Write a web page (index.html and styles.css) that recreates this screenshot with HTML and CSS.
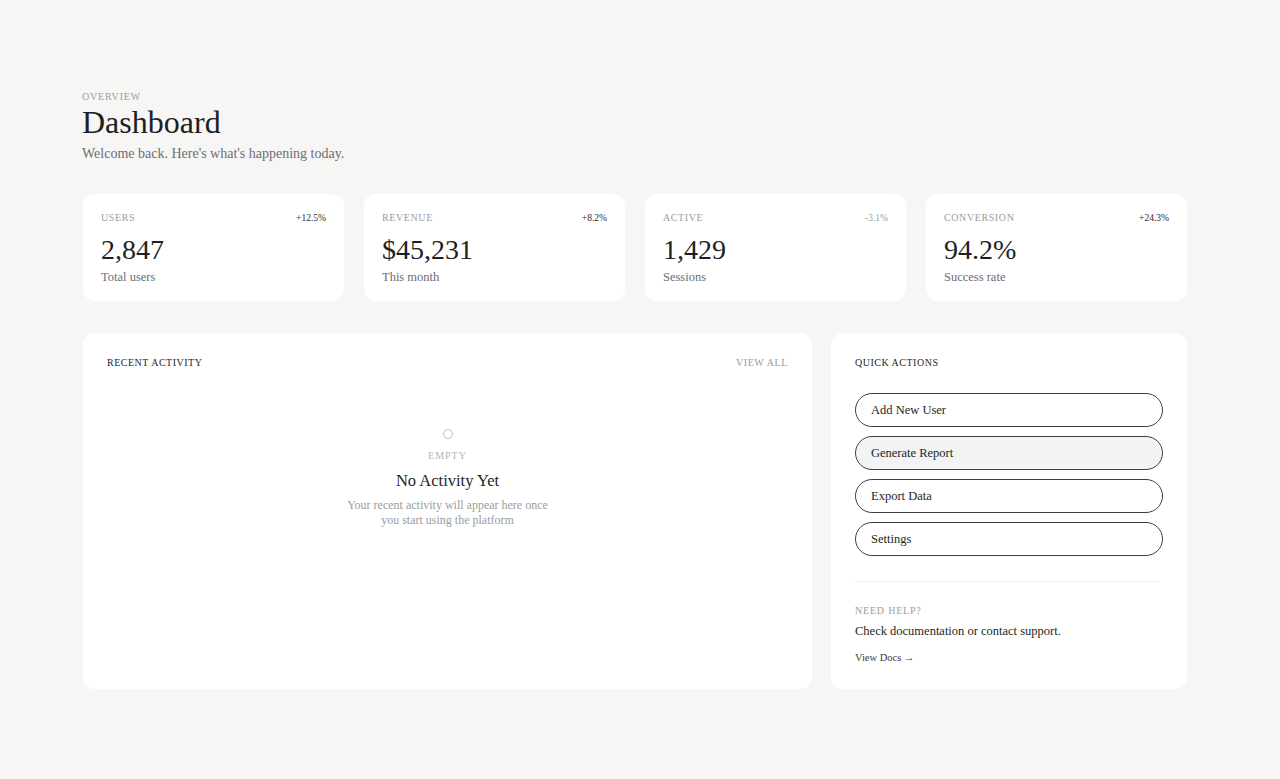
FILE: index.html
```html
<!DOCTYPE html>
<html lang="en">
<head>
    <meta charset="UTF-8">
    <meta name="viewport" content="width=device-width, initial-scale=1.0">
    <title>Dashboard</title>
    <link rel="stylesheet" href="styles.css">
</head>
<body>
    <main class="page">
        <header class="page-head">
            <p class="eyebrow">Overview</p>
            <h1>Dashboard</h1>
            <p class="subtitle">Welcome back. Here's what's happening today.</p>
        </header>

        <section class="stats">
            <div class="stat">
                <div class="stat-top">
                    <span class="stat-label">Users</span>
                    <span class="stat-change">+12.5%</span>
                </div>
                <div class="stat-value">2,847</div>
                <div class="stat-note">Total users</div>
            </div>
            <div class="stat">
                <div class="stat-top">
                    <span class="stat-label">Revenue</span>
                    <span class="stat-change">+8.2%</span>
                </div>
                <div class="stat-value">$45,231</div>
                <div class="stat-note">This month</div>
            </div>
            <div class="stat">
                <div class="stat-top">
                    <span class="stat-label">Active</span>
                    <span class="stat-change down">-3.1%</span>
                </div>
                <div class="stat-value">1,429</div>
                <div class="stat-note">Sessions</div>
            </div>
            <div class="stat">
                <div class="stat-top">
                    <span class="stat-label">Conversion</span>
                    <span class="stat-change">+24.3%</span>
                </div>
                <div class="stat-value">94.2%</div>
                <div class="stat-note">Success rate</div>
            </div>
        </section>

        <section class="panels">
            <div class="panel activity">
                <div class="panel-head">
                    <h2>Recent Activity</h2>
                    <a class="view-all" href="#">View All</a>
                </div>
                <div class="empty">
                    <span class="empty-dot"></span>
                    <span class="empty-tag">Empty</span>
                    <h3>No Activity Yet</h3>
                    <p>Your recent activity will appear here once<br>you start using the platform</p>
                </div>
            </div>

            <div class="panel actions">
                <div class="panel-head">
                    <h2>Quick Actions</h2>
                </div>
                <div class="action-list">
                    <button class="action">Add New User</button>
                    <button class="action active">Generate Report</button>
                    <button class="action">Export Data</button>
                    <button class="action">Settings</button>
                </div>
                <div class="help">
                    <p class="help-label">Need Help?</p>
                    <p class="help-text">Check documentation or contact support.</p>
                    <a class="help-link" href="#">View Docs &rarr;</a>
                </div>
            </div>
        </section>
    </main>
</body>
</html>
```

FILE: styles.css
```css
:root {
    --bg-color: #f7f6f4;
    --card-color: #ffffff;
    --text-color: #1d1f24;
    --muted-color: #6b6e75;
    --faint-color: #9a9ca1;
    --line-color: #f0efed;
}

* {
    box-sizing: border-box;
}

body {
    margin: 0;
    background: var(--bg-color);
    color: var(--text-color);
    font-family: "Liberation Serif", "DejaVu Serif", serif;
}

p, h1, h2, h3 {
    margin: 0;
    font-weight: normal;
}

.page {
    width: 1104px;
    margin: 0 0 0 83px;
    padding-top: 90px;
}

/* Header */
.eyebrow {
    font-size: 10px;
    letter-spacing: 0.8px;
    text-transform: uppercase;
    color: var(--faint-color);
    line-height: 14px;
    margin-left: -1px;
}

h1 {
    font-size: 32px;
    line-height: 38px;
    margin-top: -1px;
    margin-left: -1px;
}

.subtitle {
    font-size: 14px;
    color: var(--muted-color);
    line-height: 20px;
    margin-top: 3px;
    margin-left: -1px;
}

/* Stat cards */
.stats {
    display: grid;
    grid-template-columns: repeat(4, 1fr);
    gap: 20px;
    margin-top: 30px;
}

.stat {
    background: var(--card-color);
    border-radius: 12px;
    padding: 17px 18px 18px 18px;
    height: 107px;
}

.stat-top {
    display: flex;
    justify-content: space-between;
    align-items: center;
    line-height: 14px;
}

.stat-label {
    font-size: 10px;
    letter-spacing: 0.6px;
    text-transform: uppercase;
    color: var(--faint-color);
}

.stat-change {
    font-size: 9.5px;
    color: #2a2c31;
}

.stat-change.down {
    color: var(--faint-color);
}

.stat-value {
    font-size: 28px;
    line-height: 34px;
    margin-top: 8px;
}

.stat-note {
    font-size: 12.5px;
    color: var(--muted-color);
    line-height: 16px;
    margin-top: 2px;
}

/* Panels */
.panels {
    display: grid;
    grid-template-columns: 1fr 356px;
    gap: 19px;
    margin-top: 32px;
}

.panel {
    background: var(--card-color);
    border-radius: 12px;
    padding: 22px 24px 24px 24px;
    height: 356px;
}

.panel-head {
    display: flex;
    justify-content: space-between;
    align-items: center;
    line-height: 16px;
}

h2 {
    font-size: 10px;
    letter-spacing: 0.5px;
    text-transform: uppercase;
}

.view-all {
    font-size: 10px;
    letter-spacing: 0.6px;
    text-transform: uppercase;
    color: var(--faint-color);
    text-decoration: none;
}

/* Empty state */
.empty {
    display: flex;
    flex-direction: column;
    align-items: center;
    text-align: center;
    margin-top: 58px;
}

.empty-dot {
    width: 10px;
    height: 10px;
    border: 1px solid #b9bbbf;
    border-radius: 50%;
}

.empty-tag {
    font-size: 10px;
    letter-spacing: 1px;
    text-transform: uppercase;
    color: #b3b5b9;
    margin-top: 10px;
    line-height: 14px;
}

h3 {
    font-size: 16.5px;
    line-height: 22px;
    margin-top: 7px;
}

.empty p {
    font-size: 12px;
    line-height: 15px;
    color: var(--faint-color);
    margin-top: 6px;
}

/* Quick actions */
.action-list {
    display: flex;
    flex-direction: column;
    gap: 9px;
    margin-top: 22px;
}

.action {
    height: 34px;
    border: 1px solid #3d3f44;
    border-radius: 17px;
    background: var(--card-color);
    color: var(--text-color);
    text-align: left;
    padding: 0 15px;
    font-family: inherit;
    font-size: 12.5px;
    cursor: pointer;
}

.action.active,
.action:hover {
    background: #f1f3f4;
}

.help {
    border-top: 1px solid var(--line-color);
    margin-top: 25px;
    padding-top: 22px;
    margin-right: 3px;
}

.help-label {
    font-size: 10px;
    letter-spacing: 0.8px;
    text-transform: uppercase;
    color: var(--faint-color);
    line-height: 14px;
}

.help-text {
    font-size: 12.5px;
    line-height: 18px;
    margin-top: 4px;
}

.help-link {
    display: inline-block;
    font-size: 10.5px;
    color: #3a3c41;
    text-decoration: none;
    margin-top: 12px;
}
```
